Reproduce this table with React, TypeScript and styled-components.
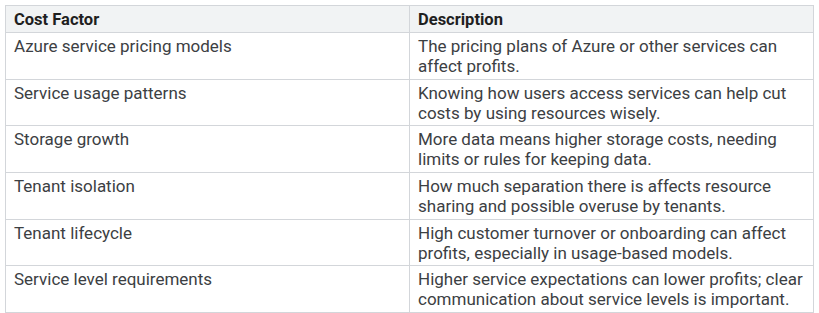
import React from "react";
import styled, { createGlobalStyle } from "styled-components";

const Global = createGlobalStyle`
  html, body { margin: 0; padding: 0; background: #ffffff; }
  body { font-family: Roboto, "Noto Sans", Arial, sans-serif; }
`;

const Wrap = styled.div`
  padding: 5px 0 0 5px;
  width: 808px;
`;

const Table = styled.table`
  border-collapse: collapse;
  width: 808px;
  table-layout: fixed;
  font-family: Roboto, Arial, sans-serif;
  font-size: 17px;
  line-height: 20px;
`;

const HeadCell = styled.th`
  background: #f1f3f4;
  color: #1f1f1f;
  font-weight: 700;
  font-size: 16.5px;
  text-align: left;
  padding: 4px 4px 2px 8px;
  border: 1px solid #d3d6da;
  vertical-align: top;
`;

const Cell = styled.td`
  color: #3c4043;
  padding: 3px 3px 2.67px 8px;
  border: 1px solid #d3d6da;
  vertical-align: top;
`;

const rows: [string, string][] = [
  ["Azure service pricing models", "The pricing plans of Azure or other services can affect profits."],
  ["Service usage patterns", "Knowing how users access services can help cut costs by using resources wisely."],
  ["Storage growth", "More data means higher storage costs, needing limits or rules for keeping data."],
  ["Tenant isolation", "How much separation there is affects resource sharing and possible overuse by tenants."],
  ["Tenant lifecycle", "High customer turnover or onboarding can affect profits, especially in usage-based models."],
  ["Service level requirements", "Higher service expectations can lower profits; clear communication about service levels is important."],
];

export default function App() {
  return (
    <>
      <Global />
      <Wrap>
        <Table>
          <colgroup>
            <col style={{ width: 404 }} />
            <col style={{ width: 404 }} />
          </colgroup>
          <thead>
            <tr>
              <HeadCell>Cost Factor</HeadCell>
              <HeadCell>Description</HeadCell>
            </tr>
          </thead>
          <tbody>
            {rows.map(([a, b]) => (
              <tr key={a}>
                <Cell>{a}</Cell>
                <Cell>{b}</Cell>
              </tr>
            ))}
          </tbody>
        </Table>
      </Wrap>
    </>
  );
}
